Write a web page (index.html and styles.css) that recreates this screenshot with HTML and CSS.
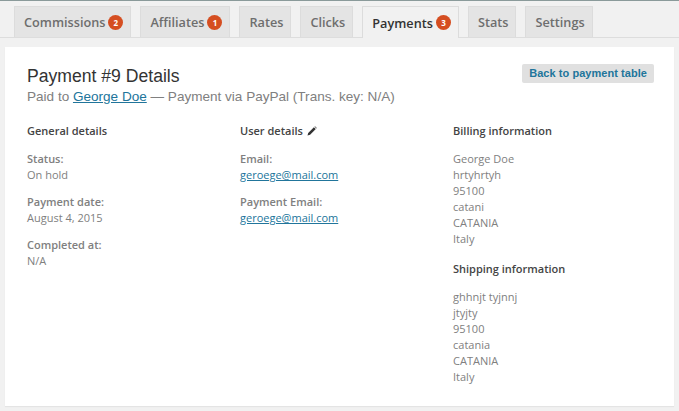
FILE: index.html
```html
<!DOCTYPE html>
<html lang="en">
<head>
<meta charset="utf-8">
<title>Payment #9 Details</title>
<link rel="stylesheet" href="styles.css">
</head>
<body>
<div class="topline"></div>
<nav class="tabs">
  <a class="tab">Commissions <span class="badge">2</span></a>
  <a class="tab">Affiliates <span class="badge">1</span></a>
  <a class="tab">Rates</a>
  <a class="tab">Clicks</a>
  <a class="tab active">Payments <span class="badge">3</span></a>
  <a class="tab">Stats</a>
  <a class="tab">Settings</a>
</nav>
<main class="card">
  <header class="head">
    <div>
      <h1>Payment #9 Details</h1>
      <p class="sub">Paid to <a href="#">George Doe</a> — Payment via PayPal (Trans. key: N/A)</p>
    </div>
    <a class="back" href="#">Back to payment table</a>
  </header>
  <div class="cols">
    <section class="col">
      <h3>General details</h3>
      <div class="item"><strong>Status:</strong><span>On hold</span></div>
      <div class="item"><strong>Payment date:</strong><span>August 4, 2015</span></div>
      <div class="item"><strong>Completed at:</strong><span>N/A</span></div>
    </section>
    <section class="col">
      <h3>User details <svg class="pencil" width="10" height="10" viewBox="0 0 10 10"><path d="M0.5 9.5 L1.2 6.9 L6.9 1.2 L8.8 3.1 L3.1 8.8 Z M7.5 0.6 L8 0.2 L9.8 2 L9.4 2.5 Z" fill="#333"/></svg></h3>
      <div class="item"><strong>Email:</strong><a href="#">geroege@mail.com</a></div>
      <div class="item"><strong>Payment Email:</strong><a href="#">geroege@mail.com</a></div>
    </section>
    <section class="col">
      <h3>Billing information</h3>
      <address>George Doe<br>hrtyhrtyh<br>95100<br>catani<br>CATANIA<br>Italy</address>
      <h3 class="second">Shipping information</h3>
      <address>ghhnjt tyjnnj<br>jtyjty<br>95100<br>catania<br>CATANIA<br>Italy</address>
    </section>
  </div>
</main>
</body>
</html>
```
FILE: styles.css
```css
html, body { margin: 0; padding: 0; }
body {
  width: 679px;
  height: 411px;
  overflow: hidden;
  background: #f1f1f1;
  font-family: "Open Sans", sans-serif;
  font-size: 11px;
  line-height: 16px;
  color: #808080;
}
.topline { height: 1px; background: #8a9a9a; }
.tabs {
  display: flex;
  gap: 9px;
  height: 31px;
  padding: 5px 0 0 14px;
  border-bottom: 1px solid #ddd;
}
.tab {
  box-sizing: border-box;
  height: 31px;
  padding: 0 7px 0 9px;
  display: flex;
  align-items: center;
  gap: 3px;
  background: #e4e4e4;
  border: 1px solid #dcdcdc;
  border-bottom: 0;
  font-size: 12.7px;
  font-weight: 600;
  color: #6e6e6e;
  white-space: nowrap;
}
.tab.active {
  height: 32px;
  background: #f1f1f1;
  color: #333;
}
.badge {
  width: 15px;
  height: 15px;
  border-radius: 50%;
  background: #d54e21;
  color: #fff;
  font-size: 8px;
  line-height: 15px;
  font-weight: 700;
  text-align: center;
}
.card {
  box-sizing: border-box;
  width: 669px;
  height: 359px;
  margin: 9px 0 0 5px;
  padding: 18px 20px 0 22px;
  background: #fff;
  box-shadow: 0 1px 1px rgba(0,0,0,.05);
}
.head { display: flex; justify-content: space-between; align-items: flex-start; }
h1 {
  margin: 0;
  font-family: "Liberation Sans", Arial, sans-serif;
  font-size: 17.6px;
  line-height: 22px;
  font-weight: 400;
  color: #333;
}
.sub {
  margin: 0;
  font-family: "Liberation Sans", Arial, sans-serif;
  font-size: 13.55px;
  line-height: 20px;
  color: #808080;
}
.sub a { color: #21759b; }
.back {
  margin-top: -1px;
  padding: 0 7px;
  height: 19px;
  line-height: 19px;
  background: #e0e0e0;
  border-radius: 2px;
  color: #21759b;
  font-family: "Liberation Sans", Arial, sans-serif;
  font-size: 11px;
  font-weight: 700;
  letter-spacing: .05px;
  text-decoration: none;
}
.cols { display: flex; margin-top: 16px; }
.col { width: 213px; }
.col:last-child { width: auto; }
h3 {
  margin: 0 0 12px;
  font-size: 11px;
  line-height: 16px;
  font-weight: 600;
  color: #444;
}
h3.second { margin-top: 14px; }
.pencil { margin-left: 1px; vertical-align: -1px; }
.item { margin-bottom: 11px; }
.item strong, .item span, .item a { display: block; }
.item strong { font-weight: 600; color: #808080; }
.item a { color: #21759b; text-decoration: underline; }
address { font-style: normal; }
```
